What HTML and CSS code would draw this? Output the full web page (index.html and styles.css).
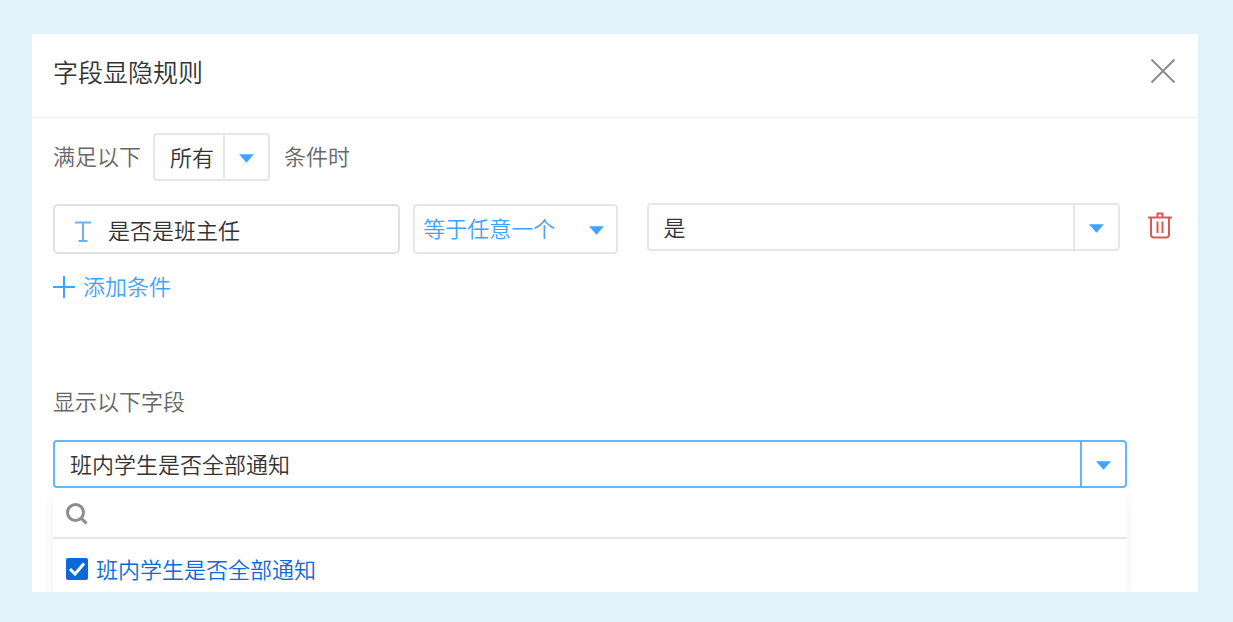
FILE: index.html
```html
<!DOCTYPE html>
<html lang="zh-CN">
<head>
<meta charset="utf-8">
<meta name="viewport" content="width=device-width, initial-scale=1">
<title>字段显隐规则</title>
<link rel="stylesheet" href="styles.css">
</head>
<body>
<main class="dialog" role="dialog" aria-labelledby="dialog-title">
  <header class="dialog-header">
    <h1 class="dialog-title" id="dialog-title">字段显隐规则</h1>
    <button class="icon-button" type="button" aria-label="关闭">
      <svg class="icon-close" viewBox="0 0 26 26" aria-hidden="true"><path d="M1.500 1.500l23 23M24.500 1.500l-23 23"/></svg>
    </button>
  </header>

  <div class="dialog-body">
    <div class="match-row">
      <label class="match-text" for="match">满足以下</label>
      <span class="select match-select split">
        <select id="match"><option>所有</option><option>任一</option></select>
        <span class="select-arrow"><svg class="caret" viewBox="0 0 16 9" aria-hidden="true"><path d="M0 0h16L8 9z"/></svg></span>
      </span>
      <span class="match-text">条件时</span>
    </div>

    <div class="condition">
      <button class="field" type="button">
        <svg class="icon-text" viewBox="0 0 16 21" aria-hidden="true"><path d="M0 1.500h16M8 1.500v18M3.500 20h9"/></svg>
        <span>是否是班主任</span>
      </button>
      <span class="select operator">
        <select aria-label="运算符"><option>等于任意一个</option></select>
        <span class="select-arrow"><svg class="caret" viewBox="0 0 16 9" aria-hidden="true"><path d="M0 0h16L8 9z"/></svg></span>
      </span>
      <span class="select value split">
        <select aria-label="值"><option>是</option><option>否</option></select>
        <span class="select-arrow"><svg class="caret" viewBox="0 0 16 9" aria-hidden="true"><path d="M0 0h16L8 9z"/></svg></span>
      </span>
      <button class="icon-button" type="button" aria-label="删除条件">
        <svg class="icon-trash" viewBox="0 0 24 27" aria-hidden="true"><path d="M0 5.500h24M9.500 5V1.500h5V5M3 5.500V22.500Q3 25.500 6 25.500H18Q21 25.500 21 22.500V5.500M9.500 9.500V21M14.500 9.500V21"/></svg>
      </button>
    </div>

    <button class="add" type="button">
      <svg class="icon-plus" viewBox="0 0 22 22" aria-hidden="true"><path d="M0 11h22M11 0v22"/></svg>
      <span>添加条件</span>
    </button>

    <section class="targets">
      <label class="targets-label" for="targets">显示以下字段</label>
      <span class="select split active">
        <select id="targets"><option>班内学生是否全部通知</option></select>
        <span class="select-arrow"><svg class="caret" viewBox="0 0 16 9" aria-hidden="true"><path d="M0 0h16L8 9z"/></svg></span>
      </span>
      <div class="dropdown">
        <div class="search">
          <svg class="icon-search" viewBox="0 0 22 22" aria-hidden="true"><circle cx="9.500" cy="9.500" r="8"/><path d="M15.500 15.500l5 5"/></svg>
          <input class="search-input" type="search" aria-label="搜索字段">
        </div>
        <label class="option">
          <input class="checkbox" type="checkbox" checked>
          <span class="option-text">班内学生是否全部通知</span>
          <svg class="tick" viewBox="0 0 22 22" aria-hidden="true"><path d="M4 11l5 5 9-10.500"/></svg>
        </label>
      </div>
    </section>
  </div>
</main>
</body>
</html>
```
FILE: styles.css
```css
* {
  box-sizing: border-box;
}

body {
  display: flex;
  min-height: 100vh;
  margin: 0;
  padding: 34px 35px 30px 32px;
  background: #e3f1fb;
  color: #666;
  font: 350 22px/32px "Noto Sans CJK SC", "Noto Sans CJK SC DemiLight", sans-serif;
}

button,
input,
select {
  margin: 0;
  padding: 0;
  border: 0;
  background: none;
  color: inherit;
  font: inherit;
}

svg {
  display: block;
  fill: none;
  stroke: currentColor;
  stroke-width: 2;
}

.dialog {
  flex: 1;
  min-width: 0;
  background: #fff;
}

.dialog-header {
  display: flex;
  align-items: center;
  justify-content: space-between;
  height: 84px;
  padding: 0 22px 10px 21px;
  border-bottom: 1px solid #f0f0f0;
}

.dialog-title {
  margin: 0;
  color: #333;
  font-size: 25px;
  font-weight: 350;
}

.icon-button {
  flex: none;
}

.icon-close {
  width: 26px;
  height: 26px;
  color: #8c8c8c;
}

.dialog-body {
  padding: 15px 26px 0 21px;
}

.match-row {
  display: flex;
  align-items: center;
}

.match-text {
  padding-bottom: 4px;
}

.select {
  display: block;
  position: relative;
  height: 48px;
  border: 2px solid #e6e6e6;
  border-radius: 4px;
}

.select select {
  display: block;
  width: 100%;
  height: 100%;
  padding: 0 48px 3px 15px;
  appearance: none;
  color: #333;
  outline: none;
}

.select-arrow {
  display: flex;
  position: absolute;
  inset: 0 0 0 auto;
  align-items: center;
  justify-content: center;
  width: 44px;
  padding-top: 2px;
  pointer-events: none;
}

.split .select-arrow {
  width: 45px;
  border-left: 2px solid #e6e6e6;
}

.caret {
  width: 15px;
  height: 9px;
  fill: #40a3ff;
  stroke: none;
}

.match-select {
  width: 117px;
  margin: 0 14px 0 12px;
}

.condition {
  display: grid;
  grid-template-columns: 347fr 217fr 502fr auto;
  align-items: start;
  margin-top: 22px;
}

.field {
  display: flex;
  align-items: center;
  gap: 17px;
  height: 50px;
  margin-top: 1px;
  padding: 0 20px;
  border: 2px solid #e0e0e0;
  border-radius: 5px;
  color: #333;
}

.icon-text {
  width: 16px;
  height: 21px;
  margin-top: 4px;
  color: #69b1ff;
}

.operator {
  height: 50px;
  margin: 1px 0 0 13px;
}

.operator select {
  padding: 0 40px 4px 8px;
  color: #40a3ff;
}

.operator .select-arrow {
  width: 38px;
}

.value {
  margin-left: 29px;
}

.condition .icon-button {
  margin: 9px 0 0 28px;
}

.icon-trash {
  width: 24px;
  height: 27px;
  color: #db5a54;
}

.add {
  display: flex;
  align-items: center;
  gap: 8px;
  margin-top: 15px;
  color: #40a3ff;
}

.icon-plus {
  width: 22px;
  height: 22px;
  margin-top: 3px;
}

.targets {
  margin: 83px 45px 0 0;
}

.targets-label {
  display: block;
  margin-bottom: 24px;
}

.active,
.active .select-arrow {
  border-color: #66b5ff;
}

.dropdown {
  box-shadow: 0 8px 12px rgba(0, 0, 0, 0.06);
  clip-path: inset(0 -20px 0 -20px);
}

.search {
  display: flex;
  align-items: center;
  gap: 10px;
  height: 51px;
  padding: 3px 13px 0;
  border-bottom: 2px solid #e6e6e6;
}

.icon-search {
  width: 22px;
  height: 22px;
  color: #8c8c8c;
  stroke-width: 3;
}

.search-input {
  flex: 1;
  min-width: 0;
  outline: none;
}

.option {
  display: flex;
  position: relative;
  align-items: center;
  gap: 8px;
  height: 53px;
  padding: 7px 13px 0;
  color: #0c69da;
}

.option-text {
  padding-bottom: 3px;
}

.checkbox {
  width: 22px;
  height: 22px;
  border-radius: 2px;
  appearance: none;
  background: #fff;
  box-shadow: inset 0 0 0 2px #8c8c8c;
}

.checkbox:checked {
  background: #0c69da;
  box-shadow: none;
}

.tick {
  position: absolute;
  left: 13px;
  width: 22px;
  height: 22px;
  color: #fff;
  stroke-width: 3;
  pointer-events: none;
}
```
